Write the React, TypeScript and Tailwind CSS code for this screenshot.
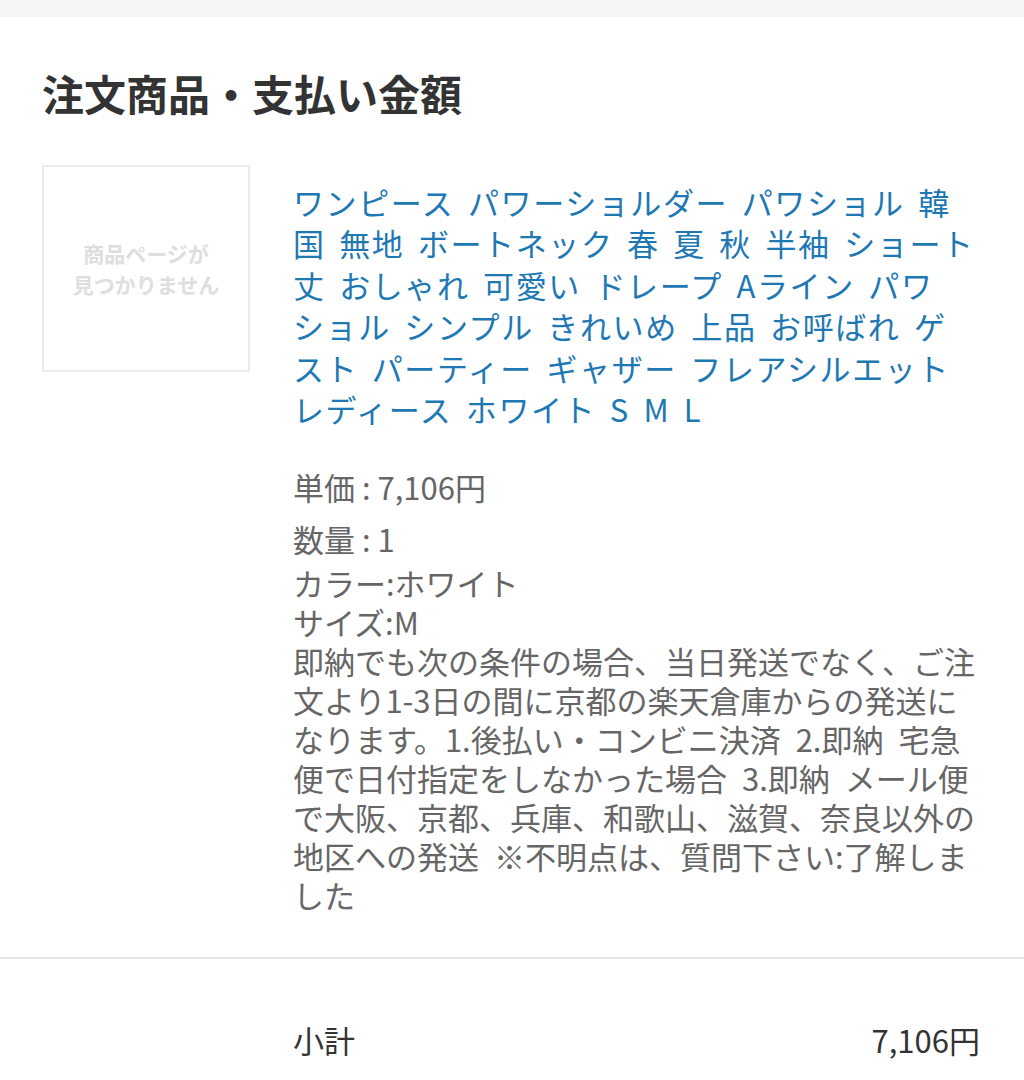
export default function App() {
  const jp = { fontFamily: '"Noto Sans CJK JP", "Noto Sans", sans-serif' };

  return (
    <div className="min-h-screen w-[1024px] bg-white" style={jp}>
      <div className="h-[17px] bg-[#f5f5f5]" />

      <h1 className="pt-[46px] pl-[42px] text-[42px] font-bold leading-[59px] text-[#333]">
        注文商品・支払い金額
      </h1>

      <div className="mt-[43px] flex gap-[43px] pl-[42px] pr-[44px] pb-[43px]">
        <div className="flex h-[207px] w-[208px] shrink-0 items-center justify-center border-2 border-[#ebebeb]">
          <p className="text-center text-[21px] font-bold leading-[31px] text-[#dedede]">
            商品ページが
            <br />
            見つかりません
          </p>
        </div>

        <div className="flex-1 pt-[16px]">
          <a className="block whitespace-nowrap text-[31px] leading-[41.4px] tracking-[1.6px] text-[#1e78b4] [word-spacing:5px]">
            ワンピース パワーショルダー パワショル 韓<br />
            国 無地 ボートネック 春 夏 秋 半袖 ショート<br />
            丈 おしゃれ 可愛い ドレープ Aライン パワ<br />
            ショル シンプル きれいめ 上品 お呼ばれ ゲ<br />
            スト パーティー ギャザー フレアシルエット<br />
            レディース ホワイト S M L
          </a>

          <div className="mt-[38px] text-[31px] leading-[39px] text-[#666]">
            <p>単価 : 7,106円</p>
            <p className="mt-[13px]">数量 : 1</p>
            <p className="mt-[5px] [word-spacing:8px]">
              カラー:ホワイト
              <br />
              サイズ:M
              <br />
              即納でも次の条件の場合、当日発送でなく、ご注文より1-3日の間に京都の楽天倉庫からの発送になります。1.後払い・コンビニ決済 2.即納 宅急便で日付指定をしなかった場合 3.即納 メール便で大阪、京都、兵庫、和歌山、滋賀、奈良以外の地区への発送 ※不明点は、質問下さい:了解しました
            </p>
          </div>
        </div>
      </div>

      <div className="h-[2px] bg-[#e8e8e8]" />

      <div className="flex items-center justify-between pt-[61px] pl-[293px] pr-[44px] pb-[20px] text-[31px] leading-[40px] text-[#333]">
        <span>小計</span>
        <span>7,106円</span>
      </div>
    </div>
  );
}
